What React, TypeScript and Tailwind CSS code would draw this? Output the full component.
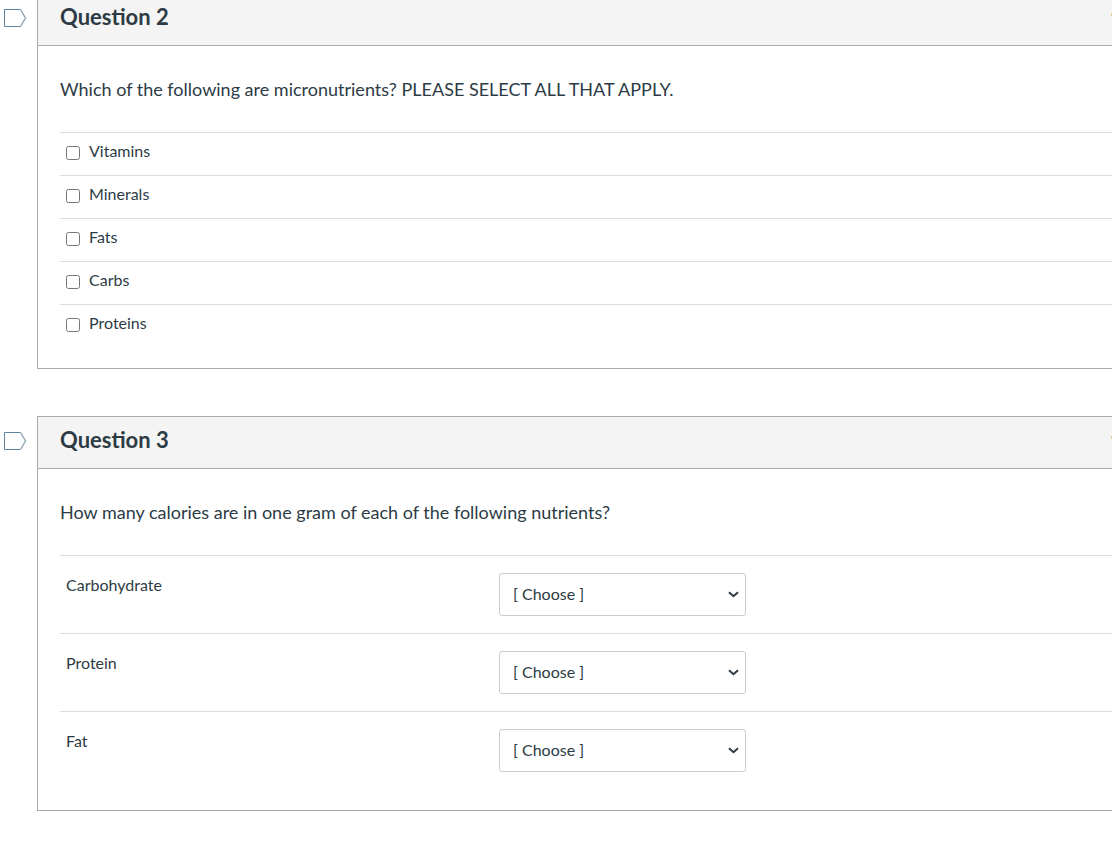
import type { ReactNode } from "react";

const nutrients = ["Vitamins", "Minerals", "Fats", "Carbs", "Proteins"];
const calorieRows = ["Carbohydrate", "Protein", "Fat"];
const calorieChoices = ["4", "7", "9"];

function FlagButton({ label }: { label: string }) {
  return (
    <button type="button" aria-label={label} className="mt-4 ml-1 block h-[18px]">
      <svg width="23" height="18" viewBox="0 0 23 18" fill="none">
        <path d="M16.5 0.5H0.5V17.5H16.5" stroke="#5d84a0" />
        <path d="M16.5 0.5L21.5 9L16.5 17.5" stroke="#8ba0b0" strokeWidth="1.3" />
      </svg>
    </button>
  );
}

function Question({
  title,
  text,
  children,
}: {
  title: string;
  text: string;
  children: ReactNode;
}) {
  return (
    <section className="flex">
      <div className="w-[37px] shrink-0">
        <FlagButton label={`Flag ${title}`} />
      </div>
      <div className="min-w-0 flex-1 border-y border-l border-[#aaaaaa]">
        <header className="flex items-start justify-between border-b border-[#aaaaaa] bg-[#f4f4f4] pt-[11px] pb-4 pl-[22px]">
          <h2 className="text-[22px] leading-6 font-bold">{title}</h2>
          <svg className="mt-2" width="1" height="3" viewBox="0 0 1 3">
            <rect width="1" height="3" fill="#e3c9a4" />
          </svg>
        </header>
        <div className="pb-[21px] pl-[22px]">
          <p className="pt-[31px] pb-[31px] text-lg leading-6">{text}</p>
          {children}
        </div>
      </div>
    </section>
  );
}

export default function App() {
  return (
    <main className="-mt-[7px] flex flex-col gap-[47px] overflow-hidden bg-white font-['Lato',sans-serif] text-base text-[#2d3b45]">
      <Question
        title="Question 2"
        text="Which of the following are micronutrients? PLEASE SELECT ALL THAT APPLY."
      >
        {nutrients.map((name) => (
          <div key={name} className="border-t border-[#dddddd] pt-[6px] pb-3 pl-[6px]">
            <label className="flex items-start gap-[9px] leading-6">
              <input type="checkbox" className="mt-[7px] size-[14px]" />
              {name}
            </label>
          </div>
        ))}
      </Question>

      <Question
        title="Question 3"
        text="How many calories are in one gram of each of the following nutrients?"
      >
        {calorieRows.map((name) => (
          <div
            key={name}
            className="flex items-start border-t border-[#dddddd] py-[17px] pl-[6px]"
          >
            <label htmlFor={name} className="w-[433px] leading-6">
              {name}
            </label>
            <div className="grid w-[247px] items-center">
              <select
                id={name}
                className="col-start-1 row-start-1 h-[43px] appearance-none rounded-[3px] border border-[#c7cdd1] bg-white pr-8 pb-[2px] pl-[13px]"
              >
                <option>[ Choose ]</option>
                {calorieChoices.map((choice) => (
                  <option key={choice}>{choice}</option>
                ))}
              </select>
              <svg
                className="pointer-events-none col-start-1 row-start-1 mr-[7px] justify-self-end"
                width="11"
                height="7"
                viewBox="0 0 11 7"
                fill="none"
              >
                <path d="M1 1.2L5.5 5.2L10 1.2" stroke="#2d3b45" strokeWidth="2" />
              </svg>
            </div>
          </div>
        ))}
      </Question>
    </main>
  );
}
